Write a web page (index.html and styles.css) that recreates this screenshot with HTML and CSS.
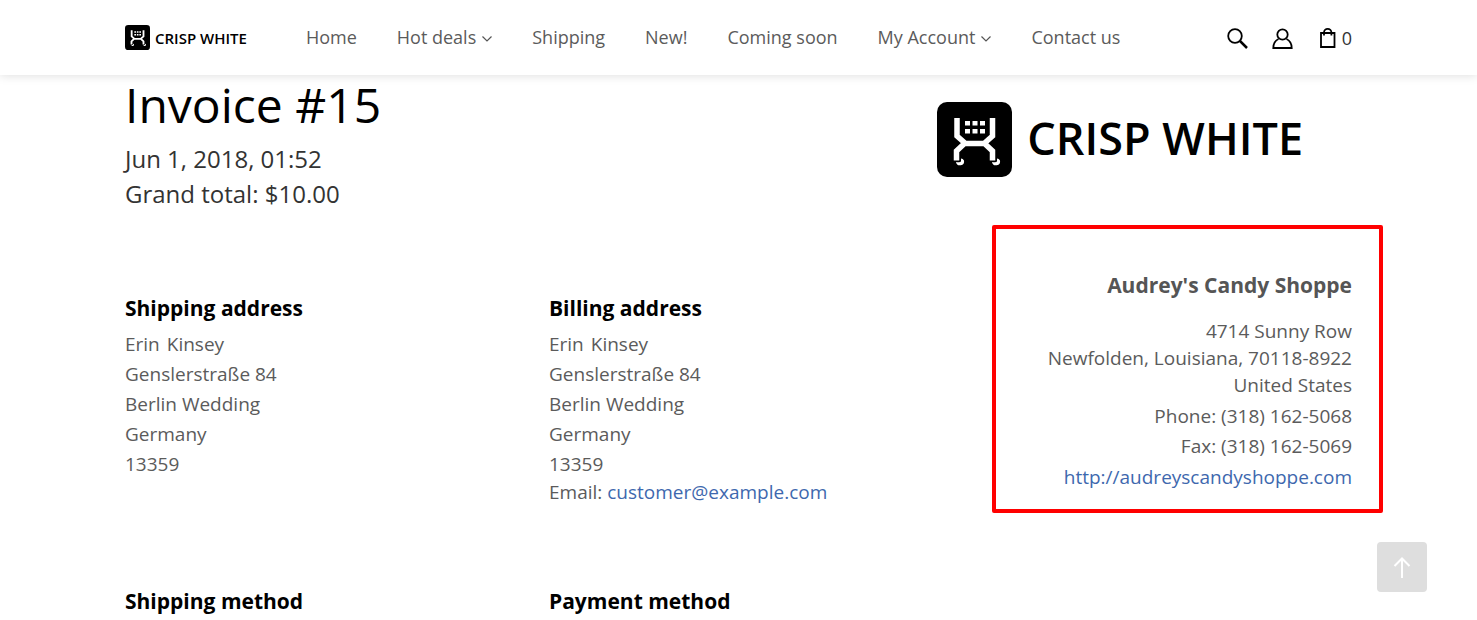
FILE: index.html
```html
<!DOCTYPE html>
<html lang="en">
<head>
<meta charset="utf-8">
<title>Invoice #15</title>
<link rel="stylesheet" href="styles.css">
</head>
<body>
<svg class="defs" aria-hidden="true">
  <symbol id="mark" viewBox="0 0 75 75">
    <rect width="75" height="75" rx="10" fill="#000"/>
    <path d="M20 16v18l8.500 7.500h18.500l8.500-7.500V16M28 41l-8.500 8v9.500M47 41l8.500 8v9.500" fill="none" stroke="#fff" stroke-width="5.500"/>
    <path d="M28 19h5v4.500h-5zM35.500 19h5v4.500h-5zM43 19h5v4.500h-5zM28 27h5v4.500h-5zM35.500 27h5v4.500h-5zM43 27h5v4.500h-5z" fill="#fff"/>
    <path d="M19 60a4 4 0 0 0 8-1.500q-1-2-3-2v2.500q0 2-5 1zM55 60a4 4 0 0 0 8-1.500q-1-2-3-2v2.500q0 2-5 1z" fill="#fff"/>
  </symbol>
</svg>
<header class="topbar">
  <a class="brand" href="#"><svg class="brand-mark"><use href="#mark"/></svg><span>CRISP WHITE</span></a>
  <nav class="nav">
    <a href="#">Home</a>
    <a href="#">Hot deals<svg class="chev" viewBox="0 0 10 6"><path d="M.5.500 5 5 9.500.500"/></svg></a>
    <a href="#">Shipping</a>
    <a href="#">New!</a>
    <a href="#">Coming soon</a>
    <a href="#">My Account<svg class="chev" viewBox="0 0 10 6"><path d="M.5.500 5 5 9.500.500"/></svg></a>
    <a href="#">Contact us</a>
  </nav>
  <div class="tools">
    <button type="button" aria-label="Search"><svg class="icon" viewBox="0 0 22 22"><circle cx="9" cy="9" r="6.800"/><path d="m14 14 7 7" stroke-width="2.500"/></svg></button>
    <button type="button" aria-label="Account"><svg class="icon" viewBox="0 0 22 22"><circle cx="11.500" cy="7.500" r="5.200"/><path d="M7.500 12Q2.300 14.500 2.300 21H20.700Q20.700 14.500 15.500 12"/></svg></button>
    <button type="button" aria-label="Cart"><svg class="icon" viewBox="0 0 22 22"><path d="M5 6H18.500V20H5zM8 8.500V5.500a3.700 3.700 0 0 1 7.400 0v3"/></svg><span>0</span></button>
  </div>
</header>
<main class="page">
  <div class="intro">
    <div>
      <h1>Invoice #15</h1>
      <p class="summary">Jun 1, 2018, 01:52<br>Grand total: $10.00</p>
    </div>
    <div class="logo"><svg class="logo-mark"><use href="#mark"/></svg><span>CRISP WHITE</span></div>
  </div>
  <div class="cards">
    <section class="card">
      <h2>Shipping address</h2>
      <address><span class="name"><span>Erin</span><span>Kinsey</span></span>Genslerstraße 84<br>Berlin Wedding<br>Germany<br>13359</address>
    </section>
    <section class="card">
      <h2>Billing address</h2>
      <address><span class="name"><span>Erin</span><span>Kinsey</span></span>Genslerstraße 84<br>Berlin Wedding<br>Germany<br>13359</address>
      <p class="email">Email: <a href="#">customer@example.com</a></p>
    </section>
    <section class="company">
      <h2>Audrey's Candy Shoppe</h2>
      <address>4714 Sunny Row<br>Newfolden, Louisiana, 70118-8922<br>United States</address>
      <p>Phone: (318) 162-5068</p>
      <p>Fax: (318) 162-5069</p>
      <p class="site"><a href="#">http://audreyscandyshoppe.com</a></p>
    </section>
    <section class="card"><h2>Shipping method</h2></section>
    <section class="card"><h2>Payment method</h2></section>
  </div>
</main>
<button class="to-top" type="button" aria-label="Back to top"><svg viewBox="0 0 20 24"><path d="M10 23V4M2.500 11 10 3.500l7.500 7.500"/></svg></button>
</body>
</html>
```
FILE: styles.css
```css
*, *::after { box-sizing: border-box; }
body {
  margin: 0;
  background: #fff;
  color: #5b5b5b;
  font: 400 19px/30px "Open Sans", sans-serif;
  overflow: hidden;
}
a { color: #3e68ae; text-decoration: none; }
h1, h2, p { margin: 0; }
address { font-style: normal; }
button { border: 0; padding: 0; background: none; font: inherit; color: inherit; }
svg { display: block; flex: none; }
.defs { position: absolute; width: 0; height: 0; }

.topbar {
  position: relative;
  display: flex;
  align-items: center;
  height: 75px;
  padding: 0 125px;
  background: #fff;
  box-shadow: 0 0 10px rgba(0, 0, 0, .15);
}
.brand {
  display: flex;
  align-items: center;
  gap: 5px;
  color: #000;
  font-size: 15px;
  font-weight: 600;
  line-height: 24px;
  white-space: nowrap;
}
.brand-mark { width: 25px; height: 25px; }
.nav {
  display: flex;
  gap: 40px;
  margin: 0 0 2px 59px;
  font-size: 18px;
  white-space: nowrap;
}
.nav a { display: flex; align-items: center; gap: 6px; color: #5b5b5b; }
.chev { width: 10px; height: 6px; margin-top: 4px; fill: none; stroke: #555; stroke-width: 1.2; }
.tools { display: flex; gap: 23px; margin-left: auto; }
.tools button { display: flex; align-items: center; gap: 4px; color: #333; font-size: 18px; }
.icon { width: 22px; height: 22px; fill: none; stroke: #000; stroke-width: 1.8; }

.page { padding: 0 125px; }
.intro { display: flex; justify-content: space-between; align-items: flex-start; }
h1 { color: #000; font-size: 48px; font-weight: 400; line-height: 60px; }
.summary { margin-top: 6px; color: #333; font-size: 24px; line-height: 35px; }
.logo {
  display: flex;
  align-items: center;
  gap: 15px;
  margin: 27px 49px 0 0;
  color: #000;
  font-size: 45px;
  font-weight: 600;
  line-height: 70px;
  white-space: nowrap;
}
.logo span { padding-bottom: 4px; }
.logo-mark { width: 75px; height: 75px; }

.cards {
  display: grid;
  grid-template-columns: 424fr 424fr 379fr;
  row-gap: 58px;
  margin-top: 59px;
}
.card { padding-top: 23px; }
h2 { color: #000; font-size: 21px; font-weight: 700; line-height: 30px; }
.card address { margin-top: 6px; }
.name { display: flex; gap: 7px; }
.email { line-height: 26px; }

.company { position: relative; align-self: start; text-align: right; }
.company::after {
  content: "";
  position: absolute;
  inset: -45px -31px -21px auto;
  width: 391px;
  border: 4px solid #f00;
  border-radius: 2px;
  pointer-events: none;
}
.company h2 { margin-bottom: 18px; color: #555; }
.company address { line-height: 27px; margin-bottom: 2px; }
.site { padding-top: 1px; }

.to-top {
  position: fixed;
  right: 50px;
  bottom: 28px;
  display: grid;
  place-items: center;
  width: 50px;
  height: 50px;
  border-radius: 4px;
  background: #dedede;
}
.to-top svg { width: 20px; height: 24px; fill: none; stroke: #fff; stroke-width: 2; }
```
